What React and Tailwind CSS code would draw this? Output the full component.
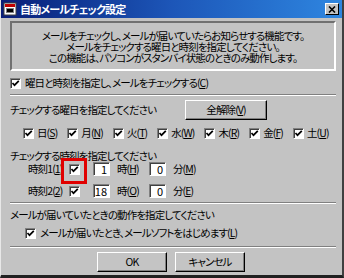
import { useState } from 'react'

const DAYS = [
  { label: '日', key: 'S' },
  { label: '月', key: 'N' },
  { label: '火', key: 'T' },
  { label: '水', key: 'W' },
  { label: '木', key: 'R' },
  { label: '金', key: 'F' },
  { label: '土', key: 'U' }
]

function CheckBox({ checked, onChange }) {
  return (
    <span
      onClick={onChange}
      className="relative inline-flex w-[11px] h-[11px] shrink-0 bg-white border-t border-l border-t-[#808080] border-l-[#808080] border-b border-r border-b-white border-r-white shadow-[inset_1px_1px_0_#404040] items-center justify-center"
    >
      {checked && (
        <svg width="9" height="9" viewBox="0 0 9 9" className="block">
          <path d="M1.5 4 L3.5 6.2 L7.8 1.8" stroke="#000" strokeWidth="1.7" fill="none" />
        </svg>
      )}
    </span>
  )
}

function Mnemonic({ k }) {
  return (
    <span className="whitespace-nowrap">
      (<span className="underline underline-offset-1">{k}</span>)
    </span>
  )
}

function NumBox({ value, width = 'w-[17px]' }) {
  return (
    <span
      className={`${width} h-[14px] shrink-0 bg-white border-t border-l border-t-[#808080] border-l-[#808080] border-b border-r border-b-white border-r-white shadow-[inset_1px_1px_0_#404040] flex items-center justify-end pr-[2px] text-[11px] leading-none tracking-normal`}
    >
      {value}
    </span>
  )
}

function Button({ children, className = '' }) {
  return (
    <button
      className={`h-[20px] shrink-0 bg-[#c4c4c4] border-t border-l border-t-white border-l-white border-b border-r border-b-black border-r-black shadow-[inset_-1px_-1px_0_#808080] text-[10.5px] leading-none text-black flex items-center justify-center whitespace-nowrap ${className}`}
    >
      {children}
    </button>
  )
}

function Separator({ className = '' }) {
  return (
    <div className={`h-[2px] border-t border-t-[#808080] border-b border-b-white ${className}`} />
  )
}

function TimeRow({ num, hour, hourKey, min, minKey, checked, highlight, className = '' }) {
  return (
    <div className={`flex items-center h-[14px] whitespace-nowrap ${className}`}>
      <span className="pl-[18px] w-[59px] shrink-0">
        時刻{num}<Mnemonic k={num === 1 ? '1' : '2'} />
      </span>
      <span className="relative flex items-center">
        <CheckBox checked={checked} />
        {highlight && (
          <span className="absolute left-[-8px] top-[-6px] w-[26px] h-[26px] border-[3px] border-[#e00000]" />
        )}
      </span>
      <span className="ml-[13px]">
        <NumBox value={hour} />
      </span>
      <span className="ml-[7px] w-[32px] shrink-0">
        時<Mnemonic k={hourKey} />
      </span>
      <NumBox value={min} />
      <span className="ml-[7px]">
        分<Mnemonic k={minKey} />
      </span>
    </div>
  )
}

export default function App() {
  const [days, setDays] = useState(DAYS.map(() => true))

  return (
    <div className="w-[344px] h-[278px] bg-[#c3c3c3] border-l border-l-[#e8e8e8] border-r-2 border-r-[#404040] border-b-[3px] border-b-[#202020] flex flex-col text-black text-[10.5px] leading-[12px] tracking-[-0.9px] [font-family:'Noto_Sans_CJK_JP','Noto_Sans',sans-serif] [font-feature-settings:'palt'] overflow-hidden select-none">
      <div className="h-[18px] shrink-0 bg-gradient-to-r from-[#0a1e78] via-[#1d56b8] to-[#2f86e0] flex items-center pl-[2px] pr-[3px]">
        <svg width="14" height="14" viewBox="0 0 14 14" className="shrink-0">
          <rect x="1" y="1" width="12" height="12" fill="#fff" stroke="#404040" />
          <rect x="2" y="2" width="10" height="3" fill="#c00000" />
          <rect x="3" y="6" width="8" height="5" fill="#808080" />
          <rect x="4" y="7" width="6" height="3" fill="#000" />
        </svg>
        <span className="ml-[3px] text-white text-[11px] font-bold leading-none tracking-[-0.8px]">自動メールチェック設定</span>
        <span className="ml-auto w-[14px] h-[12px] bg-[#c3c3c3] border-t border-l border-t-white border-l-white border-b border-r border-b-black border-r-black flex items-center justify-center">
          <svg width="8" height="7" viewBox="0 0 8 7">
            <path d="M1 0.5 L7 6.5 M7 0.5 L1 6.5" stroke="#000" strokeWidth="1.6" />
          </svg>
        </span>
      </div>

      <div className="flex flex-col pl-[9px] pr-[6px] whitespace-nowrap">
        <div className="mt-[3px] h-[50px] border-2 border-t-[#707070] border-l-[#707070] border-b-white border-r-white flex flex-col items-center justify-center leading-[11px]">
          <div>メールをチェックし、メールが届いていたらお知らせする機能です。</div>
          <div>メールをチェックする曜日と時刻を指定してください。</div>
          <div>この機能は、パソコンがスタンバイ状態のときのみ動作します。</div>
        </div>

        <div className="mt-[5px] h-[14px] flex items-center">
          <CheckBox checked={true} />
          <span className="ml-[4px]">
            曜日と時刻を指定し、メールをチェックする<Mnemonic k="C" />
          </span>
        </div>

        <Separator className="mt-[4px]" />

        <div className="mt-[4px] h-[20px] flex items-center">
          <span className="w-[175px] shrink-0">チェックする曜日を指定してください</span>
          <Button className="w-[82px] h-[19px]">
            全解除<Mnemonic k="V" />
          </Button>
        </div>

        <div className="mt-[6px] h-[14px] flex items-center pl-[13px] gap-[10px]">
          {DAYS.map((d, i) => (
            <div key={d.key} className="flex items-center">
              <CheckBox
                checked={days[i]}
                onChange={() => setDays(days.map((v, j) => (j === i ? !v : v)))}
              />
              <span className="ml-[3px]">
                {d.label}
                <Mnemonic k={d.key} />
              </span>
            </div>
          ))}
        </div>

        <div className="mt-[10px] h-[12px] flex items-center">チェックする時刻を指定してください</div>

        <TimeRow num={1} hour="1" hourKey="H" min="0" minKey="M" checked highlight />
        <TimeRow num={2} hour="18" hourKey="O" min="0" minKey="E" checked className="mt-[8px]" />

        <Separator className="mt-[4px]" />

        <div className="mt-[5px] h-[12px] flex items-center">メールが届いていたときの動作を指定してください</div>

        <div className="mt-[5px] h-[14px] flex items-center pl-[15px]">
          <CheckBox checked={true} />
          <span className="ml-[4px]">
            メールが届いたとき、メールソフトをはじめます<Mnemonic k="L" />
          </span>
        </div>

        <Separator className="mt-[6px]" />

        <div className="mt-[4px] flex justify-center gap-[8px] pr-[4px]">
          <Button className="w-[70px]">OK</Button>
          <Button className="w-[70px]">キャンセル</Button>
        </div>
      </div>
    </div>
  )
}
